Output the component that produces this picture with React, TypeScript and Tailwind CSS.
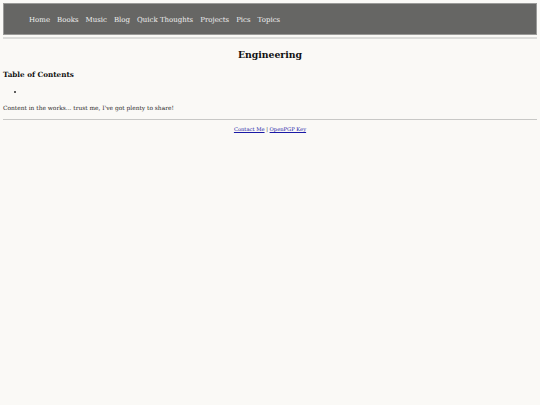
import React from 'react';

const NAV = ['Home', 'Books', 'Music', 'Blog', 'Quick Thoughts', 'Projects', 'Pics', 'Topics'];

export default function App() {
  return (
    <div className="min-h-[405px] bg-[#faf9f6] px-[3px] pt-[3px] text-[#2a2a2a] font-['Georgia','DejaVu_Serif',serif]">
      {/* nav */}
      <nav className="h-[32px] bg-[#666664] border border-[#9a9a98] flex items-center pl-[25px] pt-[2px] gap-[7px] text-[7px] text-[#f0f0f0]">
        {NAV.map(n => (
          <a key={n} className="leading-none">{n}</a>
        ))}
      </nav>
      <div className="mt-[2px] h-[2px] bg-[#dcdcda]" />

      <h1 className="mt-[11px] text-center text-[9.3px] font-bold text-[#111] leading-none">Engineering</h1>

      <h2 className="mt-[12px] text-[7.2px] font-bold text-[#111] leading-none">Table of Contents</h2>
      <ul className="mt-[10px] pl-[11px] list-disc list-inside text-[7px]">
        <li className="leading-none"></li>
      </ul>

      <p className="mt-[10px] text-[5.9px] leading-none">Content in the works... trust me, I've got plenty to share!</p>

      <div className="mt-[8px] h-px bg-[#c8c8c6]" />

      <div className="mt-[7px] text-center text-[5.2px] leading-none text-[#333]">
        <a className="underline text-[#1a1aa6]">Contact Me</a> | <a className="underline text-[#1a1aa6]">OpenPGP Key</a>
      </div>
    </div>
  );
}
